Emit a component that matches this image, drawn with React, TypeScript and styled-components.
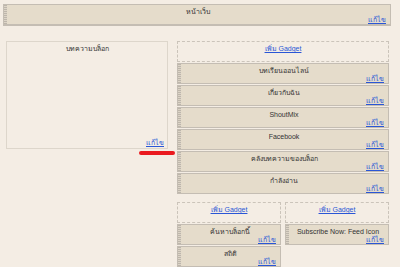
import React from 'react';
import styled, { createGlobalStyle } from 'styled-components';

const GlobalStyle = createGlobalStyle`
  html, body {
    margin: 0;
    padding: 0;
    background: #f4ede4;
  }
  body {
    font-family: "Liberation Sans", "Noto Sans", "DejaVu Sans", sans-serif;
    font-size: 7px;
    color: #333;
  }
`;

const Page = styled.div`
  width: 400px;
  height: 267px;
  padding: 4px 0 0 3px;
  box-sizing: border-box;
  overflow: hidden;
`;

const grip = `repeating-linear-gradient(to bottom, #bdb6ab 0 1px, #dcd4c7 1px 2px) left top / 3px 100% no-repeat`;

const Widget = styled.div<{ $tall?: boolean }>`
  box-sizing: border-box;
  height: ${({ $tall }) => ($tall ? 22 : 21)}px;
  margin-bottom: 1px;
  background: ${grip}, #e5dccb;
  border: 1px solid #c4bdb3;
  border-bottom-width: ${({ $tall }) => ($tall ? 2 : 1)}px;
  display: flex;
  flex-direction: column;
  padding: 3px 4px 0 6px;
`;

const Title = styled.div`
  text-align: center;
  line-height: 8px;
  white-space: nowrap;
  color: #333;
`;

const EditLink = styled.a`
  align-self: flex-end;
  margin-top: auto;
  line-height: 8px;
  color: #2a56d6;
  text-decoration: underline;
  cursor: pointer;
`;

const HeaderRow = styled.div`
  width: 388px;
`;

const Main = styled.div`
  display: flex;
  gap: 9px;
  margin-top: 15px;
  padding-left: 3px;
`;

const LeftCol = styled.div`
  width: 162px;
  position: relative;
`;

const PostsBox = styled.div`
  box-sizing: border-box;
  height: 108px;
  border: 1px solid #ddd6cb;
  display: flex;
  flex-direction: column;
  padding: 3px 3px 1px;
`;

const RedMark = styled.div`
  position: absolute;
  left: 133px;
  top: 110px;
  width: 36px;
  height: 4px;
  border-radius: 2px;
  background: #ea1a1f;
  filter: blur(0.4px);
`;

const RightCol = styled.div`
  width: 212px;
  display: flex;
  flex-direction: column;
`;

const AddGadget = styled.div`
  box-sizing: border-box;
  height: 21px;
  margin-bottom: 1px;
  border: 1px dashed #cbc4ba;
  text-align: center;
  padding-top: 3px;
  line-height: 8px;
`;

const Link = styled.a`
  color: #2a56d6;
  text-decoration: underline;
  cursor: pointer;
`;

const Split = styled.div`
  display: flex;
  gap: 4px;
  margin-top: 7px;
`;

const SubCol = styled.div`
  width: 104px;
  display: flex;
  flex-direction: column;
`;

const sidebar = [
  'บทเรียนออนไลน์',
  'เกี่ยวกับฉัน',
  'ShoutMix',
  'Facebook',
  'คลังบทความของบล็อก',
  'กำลังอ่าน',
];

const Gadget = ({ title, tall }: { title: string; tall?: boolean }) => (
  <Widget $tall={tall}>
    <Title>{title}</Title>
    <EditLink>แก้ไข</EditLink>
  </Widget>
);

const AddSlot = () => (
  <AddGadget>
    <Link>เพิ่ม Gadget</Link>
  </AddGadget>
);

export default function App() {
  return (
    <Page>
      <GlobalStyle />
      <HeaderRow>
        <Gadget title="หน้าเว็บ" tall />
      </HeaderRow>
      <Main>
        <LeftCol>
          <PostsBox>
            <Title>บทความบล็อก</Title>
            <EditLink>แก้ไข</EditLink>
          </PostsBox>
          <RedMark />
        </LeftCol>
        <RightCol>
          <AddSlot />
          {sidebar.map((t) => (
            <Gadget key={t} title={t} />
          ))}
          <Split>
            <SubCol>
              <AddSlot />
              <Gadget title="ค้นหาบล็อกนี้" />
              <Gadget title="สถิติ" />
            </SubCol>
            <SubCol>
              <AddSlot />
              <Gadget title="Subscribe Now: Feed Icon" />
            </SubCol>
          </Split>
        </RightCol>
      </Main>
    </Page>
  );
}
